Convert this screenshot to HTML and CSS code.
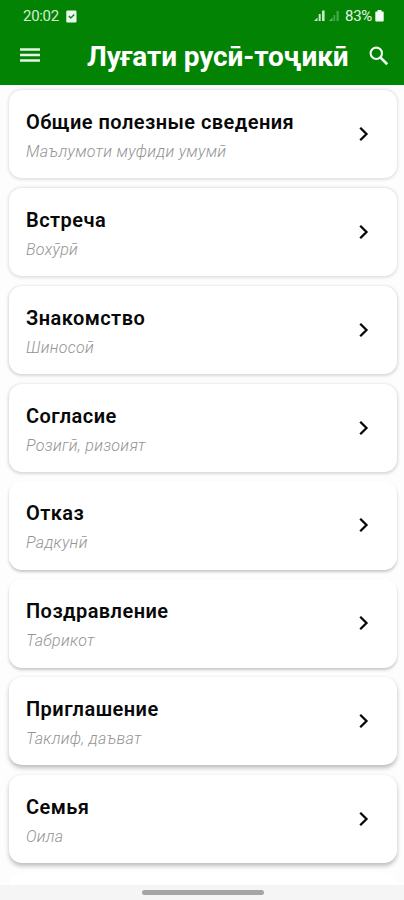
FILE: index.html
```
<!DOCTYPE html>
<html lang="tg">
<head>
<meta charset="utf-8">
<title>Луғати русӣ-тоҷикӣ</title>
<link rel="stylesheet" href="styles.css">
</head>
<body>
<header class="header">
  <div class="status">
    <span class="clock">20:02</span>
    <svg class="task" width="11" height="13" viewBox="0 0 11 13"><rect x="0.3" y="0.5" width="10.2" height="12" rx="1.2" fill="#effaef"/><path d="M2.8 6l2 2 3.4-3.6" fill="none" stroke="#16851a" stroke-width="1.5"/></svg>
    <svg class="signal" width="27" height="12" viewBox="0 0 27 12"><g fill="#c9e8c9"><path d="M0 11L3.5 7.5V11z"/><rect x="4.7" y="4" width="2" height="7"/><rect x="8" y="0.5" width="2.6" height="10.5"/></g><g fill="#69b569"><path d="M15 11L18.5 7.5V11z"/><rect x="19.5" y="5" width="1.7" height="6" opacity=".7"/><rect x="22.5" y="1" width="2.2" height="10" opacity=".7"/></g></svg>
    <span class="percent">83%</span>
    <svg class="battery" width="9" height="12" viewBox="0 0 9 12"><path d="M2.5 0h4v1.5H8a.7.7 0 0 1 .7.7v8.6a.7.7 0 0 1-.7.7H1a.7.7 0 0 1-.7-.7V2.200a.7.7 0 0 1 .7-.7h1.500z" fill="#f4fcf4"/></svg>
  </div>
  <div class="bar">
    <svg class="menu" width="20" height="16" viewBox="0 0 20 16"><path d="M0 2.500h20M0 8h20M0 13.500h20" stroke="#e4f5e4" stroke-width="2.300"/></svg>
    <h1>Луғати русӣ-тоҷикӣ</h1>
    <svg class="search" width="20" height="20" viewBox="0 0 20 20"><circle cx="7.300" cy="7.300" r="5.700" fill="none" stroke="#f2fbf2" stroke-width="2.100"/><path d="M11.600 11.600l6.600 6.600" stroke="#f2fbf2" stroke-width="2.700"/></svg>
  </div>
</header>
<main class="list">
  <article class="card s1"><div><h2>Общие полезные сведения</h2><p>Маълумоти муфиди умумӣ</p></div><svg class="chev" viewBox="0 0 10 16"><path d="M1.200 1.700L7.500 8l-6.300 6.300"/></svg></article>
  <article class="card s1"><div><h2>Встреча</h2><p>Вохӯрӣ</p></div><svg class="chev" viewBox="0 0 10 16"><path d="M1.200 1.700L7.500 8l-6.300 6.300"/></svg></article>
  <article class="card s2"><div><h2>Знакомство</h2><p>Шиносоӣ</p></div><svg class="chev" viewBox="0 0 10 16"><path d="M1.200 1.700L7.500 8l-6.300 6.300"/></svg></article>
  <article class="card s2"><div><h2>Согласие</h2><p>Розигӣ, ризоият</p></div><svg class="chev" viewBox="0 0 10 16"><path d="M1.200 1.700L7.500 8l-6.300 6.300"/></svg></article>
  <article class="card s3"><div><h2>Отказ</h2><p>Радкунӣ</p></div><svg class="chev" viewBox="0 0 10 16"><path d="M1.200 1.700L7.500 8l-6.300 6.300"/></svg></article>
  <article class="card s3"><div><h2>Поздравление</h2><p>Табрикот</p></div><svg class="chev" viewBox="0 0 10 16"><path d="M1.200 1.700L7.500 8l-6.300 6.300"/></svg></article>
  <article class="card s4"><div><h2>Приглашение</h2><p>Таклиф, даъват</p></div><svg class="chev" viewBox="0 0 10 16"><path d="M1.200 1.700L7.500 8l-6.300 6.300"/></svg></article>
  <article class="card s4"><div><h2>Семья</h2><p>Оила</p></div><svg class="chev" viewBox="0 0 10 16"><path d="M1.200 1.700L7.500 8l-6.300 6.300"/></svg></article>
  <article class="card s5"></article>
</main>
<footer class="nav"><div class="handle"></div></footer>
</body>
</html>
```
FILE: styles.css
```
* { box-sizing: border-box; margin: 0; padding: 0; }
body {
  width: 404px;
  height: 900px;
  overflow: hidden;
  display: flex;
  flex-direction: column;
  background: #fdfdfd;
  font-family: Roboto, "Noto Sans", sans-serif;
}
svg { display: block; flex: none; }
.header { height: 85px; flex: none; background: #038303; color: #fff; }
.status {
  height: 32px;
  display: flex;
  align-items: center;
  padding: 0 20px 0 23px;
  font-size: 15px;
  line-height: 32px;
  white-space: nowrap;
}
.clock { width: 43px; color: #d5efd5; letter-spacing: -0.300px; }
.signal { margin-left: auto; }
.percent { width: 30px; margin-left: 4px; color: #e5f6e5; letter-spacing: -0.300px; }
.bar { height: 53px; display: flex; align-items: center; padding: 0 15px 0 20px; }
.menu { margin-top: -7px; }
h1 {
  width: 283px;
  margin: -3px 0 0 47px;
  font-size: 28px;
  line-height: 36px;
  font-weight: 700;
  letter-spacing: -0.100px;
  white-space: nowrap;
}
.search { margin-top: -6px; }
.list {
  height: 800px;
  flex: none;
  overflow: hidden;
  padding: 5px 7.500px 0 9px;
  display: flex;
  flex-direction: column;
  gap: 9.500px;
}
.card {
  height: 88.350px;
  flex: none;
  display: flex;
  justify-content: space-between;
  padding: 18px 27.500px 0 17px;
  border-radius: 13px;
  background: #fff;
}
.s1 { box-shadow: 0 0.500px 3px 1px rgba(0,0,0,.11); }
.s2 { box-shadow: 0 1px 3px 0.500px rgba(0,0,0,.15); }
.s3 { box-shadow: 0 2px 3px rgba(0,0,0,.22); }
.s4 { box-shadow: 0 2.500px 4px rgba(0,0,0,.25); }
.s5 { box-shadow: 0 3px 3px rgba(0,0,0,.04); }
h2 {
  font-size: 20px;
  line-height: 28px;
  font-weight: 600;
  letter-spacing: 0.450px;
  color: #080808;
  white-space: nowrap;
}
p {
  margin-top: 5px;
  font-size: 16px;
  line-height: 22px;
  font-style: italic;
  font-weight: 300;
  letter-spacing: 0.300px;
  color: #949494;
  white-space: nowrap;
}
.chev { width: 10px; height: 16px; margin-top: 18px; }
.chev path { fill: none; stroke: #080808; stroke-width: 2.300; }
.nav { height: 15px; flex: none; background: #f5f5f5; padding-top: 5px; }
.handle { width: 122px; height: 5px; margin-left: 142px; border-radius: 3px; background: #a5a5a5; }
```
